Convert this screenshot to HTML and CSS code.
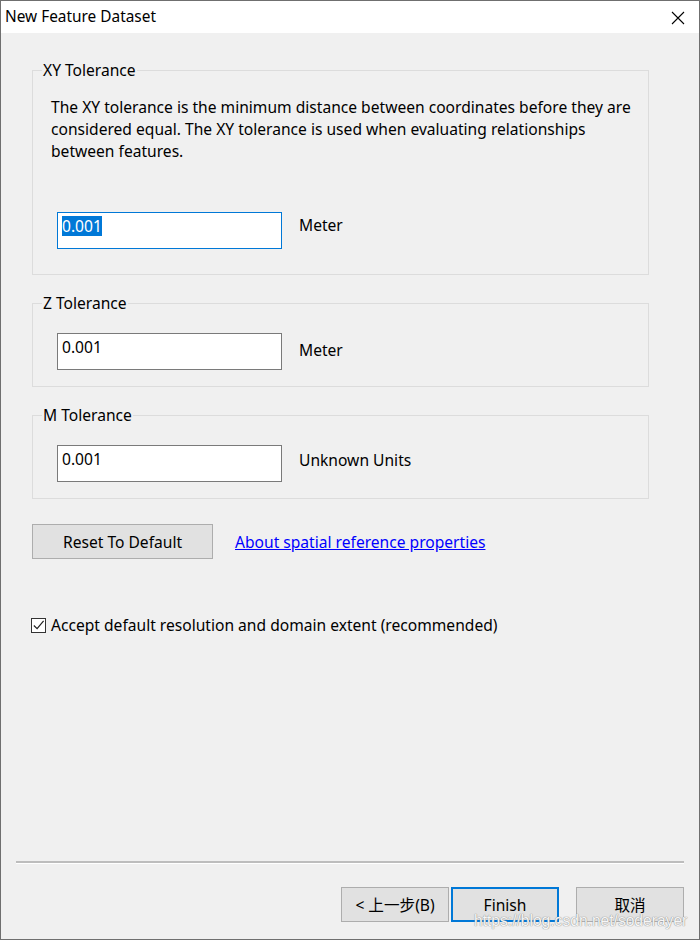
FILE: index.html
```html
<!DOCTYPE html>
<html>
<head>
<meta charset="utf-8">
<link rel="stylesheet" href="styles.css">
</head>
<body>
<div class="window">
  <div class="titlebar">
    <span class="title">New Feature Dataset</span>
    <svg class="close" width="14" height="14" viewBox="0 0 14 14"><path d="M1 1 L13 13 M13 1 L1 13" stroke="#000" stroke-width="1.1" fill="none"/></svg>
  </div>
  <div class="main">
    <fieldset class="group group-xy">
      <legend>XY Tolerance</legend>
      <p class="desc">The XY tolerance is the minimum distance between coordinates before they are considered equal. The XY tolerance is used when evaluating relationships between features.</p>
      <div class="row row-xy">
        <div class="textbox focused"><span class="sel">0.001</span></div>
        <span class="unit">Meter</span>
      </div>
    </fieldset>
    <fieldset class="group">
      <legend>Z Tolerance</legend>
      <div class="row row-z">
        <div class="textbox"><span>0.001</span></div>
        <span class="unit">Meter</span>
      </div>
    </fieldset>
    <fieldset class="group">
      <legend>M Tolerance</legend>
      <div class="row row-m">
        <div class="textbox"><span>0.001</span></div>
        <span class="unit">Unknown Units</span>
      </div>
    </fieldset>
    <div class="actions">
      <div class="btn btn-reset">Reset To Default</div>
      <a class="link" href="#">About spatial reference properties</a>
    </div>
    <label class="check">
      <span class="box"><svg width="14" height="14" viewBox="0 0 14 14"><path d="M2 7.5 L5.5 11 L12.5 2.5" stroke="#222" stroke-width="1.3" fill="none"/></svg></span>
      <span class="check-label">Accept default resolution and domain extent (recommended)</span>
    </label>
  </div>
  <div class="footer">
    <div class="separator"></div>
    <div class="buttons">
      <div class="btn btn-nav">&lt; 上一步(B)</div>
      <div class="btn btn-nav btn-default">Finish</div>
      <div class="btn btn-nav btn-cancel">取消</div>
    </div>
  </div>
  <div class="watermark">https://blog.csdn.net/soderayer</div>
</div>
</body>
</html>
```

FILE: styles.css
```css
html, body {
  margin: 0;
  padding: 0;
}
body {
  width: 700px;
  height: 940px;
  overflow: hidden;
  font-family: "Noto Sans", "Noto Sans CJK SC", sans-serif;
  font-size: 15.6px;
  color: #000;
}
.window {
  position: relative;
  box-sizing: border-box;
  width: 700px;
  height: 940px;
  border: 1px solid #6f6f6f;
  display: flex;
  flex-direction: column;
  background: #f0f0f0;
}
.titlebar {
  height: 32px;
  background: #fff;
  display: flex;
  align-items: center;
  justify-content: space-between;
  padding: 0 14px 0 4px;
  flex: none;
}
.title {
  font-size: 15.4px;
  line-height: 20px;
}
.close {
  display: block;
  margin-top: 1px;
}
.main {
  flex: 1;
  padding: 27px 50px 0 31px;
  display: flex;
  flex-direction: column;
}
.group {
  margin: 18px 0 0 0;
  border: 1px solid #dcdcdc;
  padding: 20px 10px 16px 9px;
  min-width: 0;
}
.group-xy {
  margin-top: 0;
  padding-top: 16px;
  padding-bottom: 25px;
}
.group legend {
  padding: 0 1px;
  line-height: 20px;
}
.desc {
  margin: 0 0 0 9px;
  line-height: 22px;
}
.row {
  display: flex;
  align-items: flex-start;
  margin-left: 15px;
}
.row-xy {
  margin-top: 50px;
}
.textbox {
  box-sizing: border-box;
  width: 225px;
  height: 37px;
  background: #fff;
  border: 1px solid #7a7a7a;
  padding: 3px 4px;
  line-height: 20px;
}
.textbox.focused {
  border-color: #0078d7;
}
.sel {
  background: #0078d7;
  color: #fff;
  display: inline-block;
}
.unit {
  margin-left: 17px;
  line-height: 20px;
}
.row-xy .unit { margin-top: 3px; }
.row-z .unit { margin-top: 7px; }
.row-m .unit { margin-top: 5px; }
.actions {
  display: flex;
  align-items: center;
  margin-top: 25px;
}
.btn {
  box-sizing: border-box;
  height: 35px;
  background: #e1e1e1;
  border: 1px solid #adadad;
  display: flex;
  align-items: center;
  justify-content: center;
}
.btn-reset {
  width: 181px;
}
.link {
  margin-left: 22px;
  color: #0000ff;
  text-decoration: underline;
}
.check {
  display: flex;
  align-items: center;
  margin-top: 56px;
  margin-left: -1px;
}
.box {
  box-sizing: border-box;
  width: 15px;
  height: 15px;
  border: 1px solid #333;
  background: #fff;
  display: flex;
  align-items: center;
  justify-content: center;
}
.box svg { display: block; }
.check-label {
  margin-left: 5px;
  line-height: 20px;
}
.footer {
  flex: none;
  padding: 0 15px 17px 15px;
}
.separator {
  height: 2px;
  background: #bdbdbd;
  border-bottom: 1px solid #fff;
}
.buttons {
  display: flex;
  justify-content: flex-end;
  margin-top: 23px;
}
.btn-nav {
  width: 108px;
}
.btn-default {
  margin-left: 2px;
  border: 2px solid #0078d7;
}
.btn-cancel {
  margin-left: 17px;
}
.watermark {
  position: absolute;
  left: 473px;
  top: 911px;
  font-family: "Liberation Sans", Arial, sans-serif;
  font-size: 15.6px;
  line-height: 18px;
  white-space: nowrap;
  color: #f6f6f6;
  text-shadow: 0 0 1px #8f8f8f, 0 0 1px #8f8f8f;
}
```
